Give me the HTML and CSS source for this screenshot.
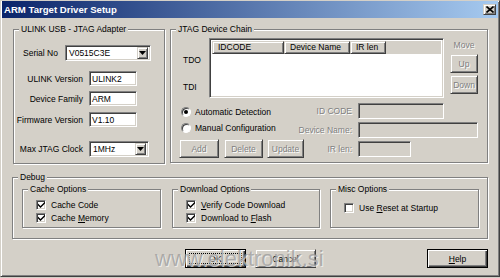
FILE: index.html
```html
<!DOCTYPE html>
<html>
<head>
<meta charset="utf-8">
<link rel="stylesheet" href="styles.css">
</head>
<body>
<div class="win">
  <div class="titlebar">
    <span class="title">ARM Target Driver Setup</span>
    <span class="close raised"><svg width="8" height="7" viewBox="0 0 8 7"><path d="M0.5 0.5L7.5 6.5M7.5 0.5L0.5 6.5" stroke="#000" stroke-width="1.6"/></svg></span>
  </div>

  <div class="top">
    <div class="group g-ulink">
      <span class="gtitle">ULINK USB - JTAG Adapter</span>
      <div class="row r1">
        <span class="lbl-s">Serial No</span>
        <div class="combo sunken w86"><span class="val">V0515C3E</span><span class="dd raised"><svg width="7" height="4" viewBox="0 0 7 4"><path d="M0 0H7L3.5 4Z"/></svg></span></div>
      </div>
      <div class="row r2"><span class="lbl">ULINK Version</span><div class="field sunken w48">ULINK2</div></div>
      <div class="row r3"><span class="lbl">Device Family</span><div class="field sunken w48">ARM</div></div>
      <div class="row r4"><span class="lbl">Firmware Version</span><div class="field sunken w48">V1.10</div></div>
      <div class="row r5">
        <span class="lbl">Max JTAG Clock</span>
        <div class="combo sunken w60"><span class="val">1MHz</span><span class="dd raised"><svg width="7" height="4" viewBox="0 0 7 4"><path d="M0 0H7L3.5 4Z"/></svg></span></div>
      </div>
    </div>

    <div class="group g-jtag">
      <span class="gtitle">JTAG Device Chain</span>
      <div class="jtop">
        <div class="tdcol"><span>TDO</span><span class="tdi">TDI</span></div>
        <div class="list sunken">
          <div class="lhead">
            <span class="hcell raised c1">IDCODE</span>
            <span class="hcell raised c2">Device Name</span>
            <span class="hcell raised c3">IR len</span>
          </div>
        </div>
        <div class="movecol">
          <span class="move-lbl dis">Move</span>
          <span class="btn raised up dis">Up</span>
          <span class="btn raised down dis">Down</span>
        </div>
      </div>
      <div class="jbottom">
        <div class="jleft">
          <div class="radio-row"><span class="radio"><span class="dot"></span></span><span>Automatic Detection</span></div>
          <div class="radio-row"><span class="radio"></span><span>Manual Configuration</span></div>
          <div class="jbtns">
            <span class="btn raised b-add dis">Add</span>
            <span class="btn raised b-del dis">Delete</span>
            <span class="btn raised b-upd dis">Update</span>
          </div>
        </div>
        <div class="jright">
          <span class="rl dis">ID CODE</span><span class="dfield sunken w86"></span>
          <span class="rl dis">Device Name:</span><span class="dfield sunken w120"></span>
          <span class="rl dis">IR len:</span><span class="dfield sunken w53"></span>
        </div>
      </div>
    </div>
  </div>

  <div class="group g-debug">
    <span class="gtitle">Debug</span>
    <div class="group sub s-cache">
      <span class="gtitle">Cache Options</span>
      <div class="chk-row"><span class="chk sunken"><svg width="7" height="7" viewBox="0 0 7 7"><path d="M0 2.5L2.5 5L7 0.5V2.5L2.5 7L0 4.5Z"/></svg></span><span>Cache Code</span></div>
      <div class="chk-row"><span class="chk sunken"><svg width="7" height="7" viewBox="0 0 7 7"><path d="M0 2.5L2.5 5L7 0.5V2.5L2.5 7L0 4.5Z"/></svg></span><span>Cache <u>M</u>emory</span></div>
    </div>
    <div class="group sub s-dl">
      <span class="gtitle">Download Options</span>
      <div class="chk-row"><span class="chk sunken"><svg width="7" height="7" viewBox="0 0 7 7"><path d="M0 2.5L2.5 5L7 0.5V2.5L2.5 7L0 4.5Z"/></svg></span><span><u>V</u>erify Code Download</span></div>
      <div class="chk-row"><span class="chk sunken"><svg width="7" height="7" viewBox="0 0 7 7"><path d="M0 2.5L2.5 5L7 0.5V2.5L2.5 7L0 4.5Z"/></svg></span><span>Download to <u>F</u>lash</span></div>
    </div>
    <div class="group sub s-misc">
      <span class="gtitle">Misc Options</span>
      <div class="chk-row"><span class="chk sunken"></span><span>Use <u>R</u>eset at Startup</span></div>
    </div>
  </div>

  <div class="btnrow">
    <span class="pbtn default"><span class="focus">OK</span></span>
    <span class="pbtn raised cancel">Cancel</span>
    <span class="pbtn default help"><u>H</u>elp</span>
  </div>

  <div class="watermark">www.elektronik.si</div>
</div>
</body>
</html>
```

FILE: styles.css
```css
html, body { margin: 0; padding: 0; background: #d4d0c8; }

.win {
  position: relative;
  width: 500px;
  height: 277px;
  box-sizing: border-box;
  border: 1px solid;
  border-color: #d4d0c8 #404040 #404040 #d4d0c8;
  box-shadow: inset 1px 1px #fff, inset -1px -1px #808080;
  background: #d4d0c8;
  font-family: "Liberation Sans", Arial, sans-serif;
  font-size: 8.5px;
  color: #000;
  overflow: hidden;
}

.raised {
  box-sizing: border-box;
  border: 1px solid;
  border-color: #d4d0c8 #404040 #404040 #d4d0c8;
  box-shadow: inset 1px 1px #fff, inset -1px -1px #808080;
  background: #d4d0c8;
}

.sunken {
  box-sizing: border-box;
  border: 1px solid;
  border-color: #808080 #fff #fff #808080;
  box-shadow: inset 1px 1px #404040, inset -1px -1px #d4d0c8;
  background: #fff;
}

.dis { color: #808080; text-shadow: 1px 1px 0 #fff; }

/* title bar */
.titlebar {
  height: 17px;
  margin: 0 1px;
  padding: 0 2px;
  display: flex;
  align-items: center;
  justify-content: space-between;
  background: linear-gradient(to right, #0a246a, #a6caf0);
}
.title { color: #fff; font-weight: bold; font-size: 9.6px; }
.close {
  width: 13px;
  height: 11px;
  display: flex;
  align-items: center;
  justify-content: center;
}

/* groups */
.top {
  display: flex;
  align-items: flex-start;
  gap: 5px;
  margin-top: 11px;
  padding-left: 12px;
}
.group {
  position: relative;
  box-sizing: border-box;
  border: 1px solid #808080;
  box-shadow: inset 1px 1px #fff, 1px 1px #fff;
}
.gtitle {
  position: absolute;
  top: -6px;
  left: 5px;
  padding: 0 2px;
  line-height: 11px;
  background: #d4d0c8;
  white-space: nowrap;
}

/* ULINK group */
.g-ulink { width: 152px; height: 135px; }
.row { display: flex; align-items: center; }
.lbl { width: 69px; margin-right: 6px; text-align: right; white-space: nowrap; }
.lbl-s { width: 35px; margin-right: 7px; white-space: nowrap; }
.r1 { margin-top: 15px; padding-left: 9px; }
.r2 { margin-top: 10px; }
.r3 { margin-top: 5px; }
.r4 { margin-top: 6px; }
.r5 { margin-top: 14px; }

.field {
  height: 15px;
  padding-left: 2px;
  display: flex;
  align-items: center;
}
.w48 { width: 48px; }
.w86 { width: 86px; }
.w60 { width: 60px; }
.w120 { width: 120px; }
.w53 { width: 53px; }

.combo {
  height: 16px;
  padding: 2px;
  display: flex;
  align-items: center;
  justify-content: space-between;
}
.combo .val { padding-left: 1px; }
.dd {
  width: 11px;
  height: 12px;
  display: flex;
  align-items: center;
  justify-content: center;
}

/* JTAG group */
.g-jtag { width: 318px; height: 134px; }
.jtop { display: flex; margin-top: 8px; }
.tdcol {
  width: 38px;
  box-sizing: border-box;
  padding-left: 12px;
  padding-top: 17px;
  display: flex;
  flex-direction: column;
  line-height: 11px;
}
.tdi { margin-top: 16px; }
.list {
  width: 235px;
  height: 60px;
  padding: 2px;
}
.lhead { display: flex; height: 13px; background: #d4d0c8; }
.hcell {
  height: 13px;
  padding-left: 5px;
  line-height: 11px;
  white-space: nowrap;
}
.c1 { width: 72px; }
.c2 { width: 66px; }
.c3 { width: 36px; }

.movecol {
  width: 28px;
  margin-left: 6px;
  display: flex;
  flex-direction: column;
}
.move-lbl { text-align: center; padding-top: 2px; line-height: 11px; }
.btn {
  height: 19px;
  display: flex;
  align-items: center;
  justify-content: center;
}
.up { margin-top: 3px; }
.down { margin-top: 2px; }

.jbottom { display: flex; margin-top: 3px; }
.jleft { flex: none; width: 100px; min-width: 0; margin-left: 8px; padding-top: 3px; }
.radio-row {
  height: 16px;
  display: flex;
  align-items: center;
  gap: 4px;
  padding-left: 2px;
  white-space: nowrap;
}
.radio {
  width: 10px;
  height: 10px;
  box-sizing: border-box;
  border-radius: 50%;
  border: 1px solid;
  border-color: #808080 #fff #fff #808080;
  box-shadow: inset 1px 1px #404040;
  background: #fff;
  display: flex;
  align-items: center;
  justify-content: center;
}
.dot { width: 4px; height: 4px; border-radius: 50%; background: #000; }
.jbtns { display: flex; margin-top: 3px; }
.b-add { flex: 0 0 40px; }
.b-del { flex: 0 0 39px; margin-left: 5px; }
.b-upd { flex: 0 0 37px; margin-left: 4px; }

.jright {
  flex: none;
  margin-left: auto;
  margin-right: 9px;
  padding-top: 2px;
  display: grid;
  grid-template-columns: 60px 120px;
  grid-auto-rows: 16px;
  column-gap: 6px;
  row-gap: 3px;
  align-items: center;
}
.rl { text-align: right; white-space: nowrap; }
.dfield { height: 16px; background: #d4d0c8; }

/* Debug */
.g-debug {
  width: 476px;
  height: 62px;
  margin-top: 13px;
  margin-left: 11px;
  padding-top: 11px;
  padding-left: 9px;
  display: flex;
  align-items: flex-start;
}
.sub { height: 39px; }
.s-cache { width: 139px; padding-top: 8px; }
.s-dl { width: 148px; margin-left: 11px; padding-top: 8px; }
.s-misc { width: 149px; margin-left: 10px; padding-top: 11px; }
.chk-row {
  height: 13px;
  display: flex;
  align-items: center;
  padding-left: 13px;
  gap: 5px;
  white-space: nowrap;
}
.chk {
  width: 10px;
  height: 10px;
  display: flex;
  align-items: center;
  justify-content: center;
}

/* bottom buttons */
.btnrow {
  display: flex;
  margin-top: 10px;
  padding-left: 184px;
  padding-right: 11px;
}
.pbtn {
  width: 61px;
  height: 19px;
  box-sizing: border-box;
  display: flex;
  align-items: center;
  justify-content: center;
}
.default {
  border: 1px solid #000;
  box-shadow: inset 1px 1px #fff, inset -1px -1px #404040, inset -2px -2px #808080;
  background: #d4d0c8;
}
.focus {
  flex: 1;
  align-self: stretch;
  margin: 3px;
  border: 1px dotted #000;
  display: flex;
  align-items: center;
  justify-content: center;
}
.cancel { margin-left: 9px; }
.help { margin-left: auto; }

.watermark {
  position: absolute;
  left: 154px;
  top: 247px;
  font-size: 22px;
  line-height: 22px;
  color: rgba(150, 150, 150, 0.7);
  text-shadow: 1px 1px 0 rgba(255, 255, 255, 0.6);
  white-space: nowrap;
  pointer-events: none;
}
```
